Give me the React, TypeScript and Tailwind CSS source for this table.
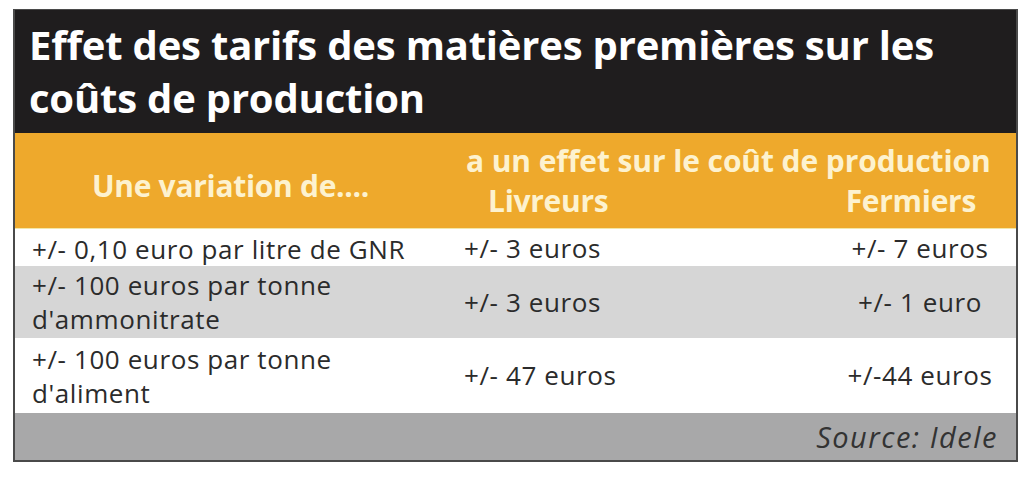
const rows = [
  {
    label: ["+/- 0,10 euro par litre de GNR"],
    livreurs: "+/- 3 euros",
    fermiers: "+/- 7 euros",
    bg: "bg-white",
    h: "h-[37px]",
  },
  {
    label: ["+/- 100 euros par tonne", "d'ammonitrate"],
    livreurs: "+/- 3 euros",
    fermiers: "+/- 1 euro",
    bg: "bg-[#d6d6d6]",
    h: "h-[72px]",
  },
  {
    label: ["+/- 100 euros par tonne", "d'aliment"],
    livreurs: "+/- 47 euros",
    fermiers: "+/-44 euros",
    bg: "bg-white",
    h: "h-[75px]",
  },
];

export default function App() {
  return (
    <div className="w-[1024px] h-[478px] bg-white pt-[9px] pl-[13px] font-['Open_Sans',sans-serif]">
      <div className="w-[1005px] border-2 border-t border-[#4a4a4a] bg-white">
        {/* Title */}
        <div className="bg-[#1f1d1e] pl-[14px] pt-[8px] pb-[9px] text-white font-bold text-[40px] leading-[53px] tracking-[-0.2px]">
          Effet des tarifs des matières premières sur les
          <br />
          coûts de production
        </div>

        {/* Header */}
        <div className="grid grid-cols-[437px_1fr] h-[95px] bg-[#eea92c] text-[#fdf2cf] font-bold text-[30px] tracking-[-0.3px]">
          <div className="flex items-center justify-center pt-[10px] pr-[6px]">Une variation de....</div>
          <div className="flex flex-col pt-[8px]">
            <div className="leading-[40px] pl-[14px] tracking-[-0.1px]">a un effet sur le coût de production</div>
            <div className="flex justify-between leading-[40px] pl-[36px] pr-[40px]">
              <span>Livreurs</span>
              <span>Fermiers</span>
            </div>
          </div>
        </div>

        {/* Rows */}
        <div className="h-[1px] bg-[#f3e7a8]" />
        {rows.map((r, i) => (
          <div
            key={i}
            className={`grid grid-cols-[437px_350px_1fr] items-center ${r.bg} ${r.h} text-[#2b2b2b] font-medium text-[26px] tracking-[0.6px]`}
          >
            <div className="pl-[17px] leading-[34px]">
              {r.label.map((l, j) => (
                <div key={j}>{l}</div>
              ))}
            </div>
            <div className="pl-[12px]">{r.livreurs}</div>
            <div className="text-center pl-[22px]">{r.fermiers}</div>
          </div>
        ))}

        {/* Footer */}
        <div className="h-[47px] bg-[#a8a8a9] flex items-center justify-end pr-[18px] text-[#333] italic text-[29px] tracking-[1.5px]">
          Source: Idele
        </div>
      </div>
    </div>
  );
}
